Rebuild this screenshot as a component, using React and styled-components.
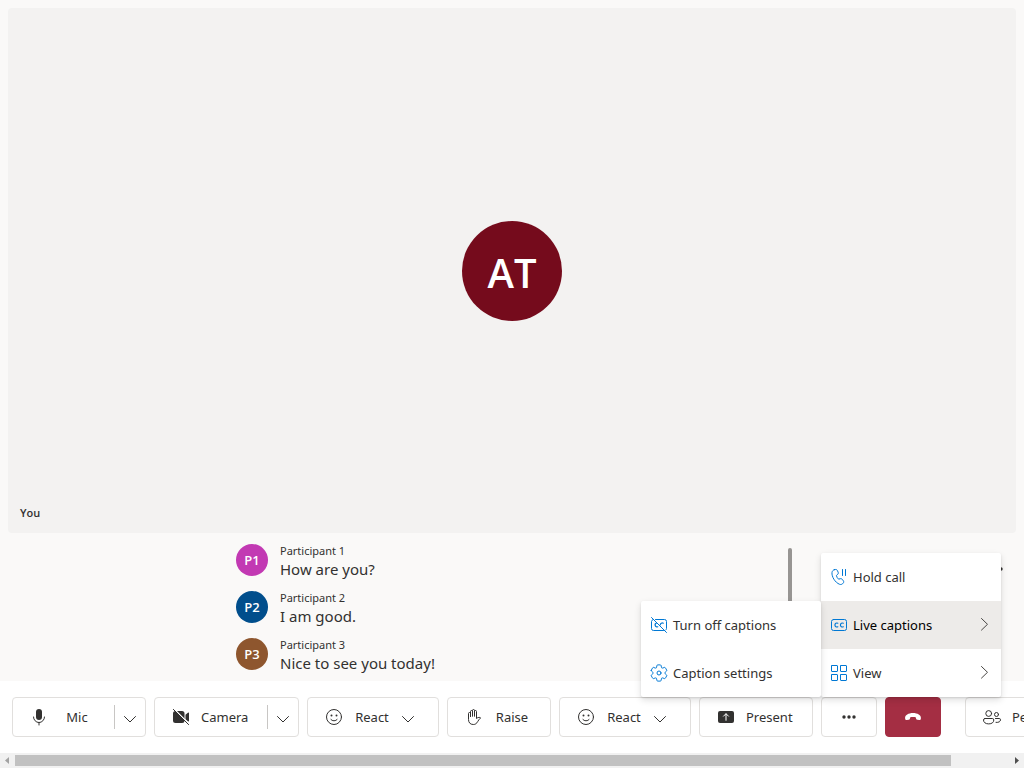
import React from 'react';
import styled, { createGlobalStyle } from 'styled-components';

const GlobalStyle = createGlobalStyle`
  * { box-sizing: border-box; }
  body {
    margin: 0;
    background: #faf9f8;
    color: #323130;
    font-family: "Noto Sans", "Open Sans", sans-serif;
    font-size: 13px;
  }
  button { font: inherit; color: inherit; }
`;

const Page = styled.div`
  display: flex;
  flex-direction: column;
  min-height: 100vh;
  overflow: hidden;
`;

const VideoTile = styled.main`
  flex: 1;
  display: grid;
  grid-template-rows: 1fr auto 1fr;
  justify-items: center;
  margin: 8px 8px 0;
  min-height: 240px;
  border-radius: 4px;
  background: #f3f2f1;
`;

const Avatar = styled.div`
  display: flex;
  align-items: center;
  justify-content: center;
  flex: none;
  width: ${(p) => p.$size}px;
  height: ${(p) => p.$size}px;
  border-radius: 50%;
  background: ${(p) => p.$color};
  color: #fff;
  font-family: "Open Sans", "Noto Sans", sans-serif;
  font-size: ${(p) => p.$font}px;
  font-weight: 600;
`;

const TileAvatar = styled(Avatar)`
  grid-row: 2;
  padding-top: 4px;
`;

const TileName = styled.span`
  grid-row: 3;
  align-self: end;
  justify-self: start;
  padding: 12px;
  font-family: "Open Sans", "Noto Sans", sans-serif;
  font-size: 11px;
  line-height: 16px;
  font-weight: 600;
`;

const CaptionStrip = styled.section`
  display: grid;
  grid-template-columns: 1fr 556px 1fr;
  height: 148px;
  padding: 11px 8px 0 12px;
`;

const CaptionPanel = styled.div`
  grid-column: 2;
  display: flex;
  justify-content: space-between;
`;

const CaptionList = styled.ul`
  display: flex;
  flex-direction: column;
  gap: 10px;
  margin: 0;
  padding: 0;
  list-style: none;
`;

const CaptionRow = styled.li`
  display: flex;
  gap: 12px;
  height: 37px;
`;

const Speaker = styled.div`
  font-size: 11px;
  line-height: 14px;
`;

const Spoken = styled.div`
  font-size: 15px;
  line-height: 22px;
`;

const CaptionScroll = styled.div`
  width: 4px;
  height: 72px;
  margin-top: 4px;
  border-radius: 2px;
  background: #979593;
`;

const CaptionOptions = styled.button`
  justify-self: end;
  align-self: start;
  display: flex;
  margin: 15px 10px 0 0;
  padding: 0;
  border: 0;
  background: none;
`;

const ControlBar = styled.nav`
  display: flex;
  gap: 8px;
  height: 72px;
  padding: 16px 12px;
  background: #fff;
`;

const ControlButton = styled.button`
  display: flex;
  align-items: center;
  flex: none;
  gap: 8px;
  width: ${(p) => p.$width}px;
  height: 40px;
  padding: 0 0 0 16px;
  border: 1px solid #e1dfdd;
  border-radius: 4px;
  background: #fff;
`;

const IconOnlyButton = styled(ControlButton)`
  justify-content: center;
  padding: 0;
`;

const HangUpButton = styled(IconOnlyButton)`
  margin-right: 16px;
  border-color: #a42e43;
  background: #a42e43;
  color: #fff;
`;

const SplitControl = styled.div`
  display: flex;
  align-items: center;
  flex: none;
  width: ${(p) => p.$width}px;
  height: 40px;
  border: 1px solid #e1dfdd;
  border-radius: 4px;
  background: #fff;
`;

const SplitMain = styled.button`
  flex: 1;
  display: flex;
  align-items: center;
  gap: 8px;
  height: 24px;
  padding: 0 0 0 16px;
  border: 0;
  border-right: 1px solid #c8c6c4;
  background: none;
`;

const SplitMenu = styled.button`
  display: flex;
  align-items: center;
  justify-content: center;
  width: 30px;
  height: 38px;
  padding: 4px 0 0;
  border: 0;
  background: none;
`;

const Label = styled.span`
  min-width: 40px;
  padding: 0 2px;
  text-align: center;
  white-space: nowrap;
`;

const DropMark = styled.span`
  display: flex;
  padding-top: 4px;
`;

const MenuAnchor = styled.div`
  position: relative;
  flex: none;
`;

const Menu = styled.ul`
  position: absolute;
  z-index: 2;
  width: 180px;
  margin: 0;
  padding: 0;
  list-style: none;
  border-radius: 2px;
  background: #fff;
  box-shadow: 0 3px 7px rgba(0, 0, 0, 0.13), 0 1px 2px rgba(0, 0, 0, 0.11);
`;

const MoreMenu = styled(Menu)`
  bottom: 100%;
  left: 0;
`;

const SubMenu = styled(Menu)`
  top: 0;
  right: 100%;
`;

const MenuEntry = styled.li`
  position: relative;
`;

const MenuItem = styled.button`
  display: flex;
  align-items: center;
  gap: 4px;
  width: 100%;
  height: 48px;
  padding: 0 8px;
  border: 0;
  background: ${(p) => (p.$active ? '#edebe9' : 'transparent')};
  color: ${(p) => (p.$active ? '#000' : '#323130')};
  text-align: left;
`;

const MenuText = styled.span`
  flex: 1;
`;

const MenuIcon = styled.span`
  display: flex;
  color: #0078d4;
`;

const ScrollTrack = styled.div`
  display: flex;
  align-items: center;
  height: 15px;
  background: #f1f1f1;
`;

const ScrollArrow = styled.button`
  display: flex;
  align-items: center;
  justify-content: center;
  width: 15px;
  height: 15px;
  padding: 0;
  border: 0;
  background: none;
  color: ${(p) => (p.$dim ? '#a3a3a3' : '#505050')};
`;

const ScrollRail = styled.div`
  flex: 1;
  padding-right: 58px;
`;

const ScrollThumb = styled.div`
  height: 11px;
  background: #c1c1c1;
`;

const Svg = styled.svg`
  display: block;
  flex: none;
  fill: none;
  stroke: currentColor;
  stroke-width: 1;
  stroke-linecap: round;
  stroke-linejoin: round;
`;

const Icon = ({ size = 20, children }) => (
  <Svg width={size} height={size} viewBox={`0 0 ${size} ${size}`} aria-hidden="true">
    {children}
  </Svg>
);

const solid = { fill: 'currentColor', stroke: 'none' };

const MicIcon = () => (
  <Icon>
    <rect x="7" y="2" width="6" height="11" rx="3" {...solid} />
    <path d="M4.5 10a5.5 5.5 0 0 0 11 0M10 15.5V18" />
  </Icon>
);

const CameraOffIcon = () => (
  <Icon>
    <path d="M4.5 4H11a2.5 2.5 0 0 1 2.5 2.5v7A2.5 2.5 0 0 1 11 16H4.500A2.5 2.5 0 0 1 2 13.500v-7A2.5 2.5 0 0 1 4.500 4ZM14.500 7.700l2.700-2.100c.3-.3.8 0 .8.4v8c0 .4-.5.7-.8.4l-2.700-2.100Z" {...solid} />
    <path d="M3 2l15.500 15.500" stroke="#fff" strokeWidth="1.5" />
    <path d="M2.400 2.400l15.200 15.200" />
  </Icon>
);

const SmileIcon = () => (
  <Icon>
    <circle cx="10" cy="10" r="7.5" />
    <path d="M6.900 12.500a4 4 0 0 0 6.200 0" />
    <circle cx="7.5" cy="8.5" r="1" {...solid} />
    <circle cx="12.5" cy="8.5" r="1" {...solid} />
  </Icon>
);

const HandIcon = () => (
  <Icon>
    <path d="M6.500 9.500V4.500a1 1 0 0 1 2 0V9M8.500 9V3.500a1 1 0 0 1 2 0V9M10.500 9V4.500a1 1 0 0 1 2 0V11.500c.9-.9 2.300-1.300 3.700-1 .3.1.4.4.2.7-1.300 1-1.900 2.100-2.700 3.400-1.100 1.900-2.200 2.900-4.400 2.900-3.200 0-4.800-2.100-4.800-5V6.500a1 1 0 0 1 2 0V9.500" />
  </Icon>
);

const PresentIcon = () => (
  <Icon>
    <rect x="2" y="4" width="16" height="12" rx="2" {...solid} />
    <path d="M10 13.300V7M7.500 9.200L10 6.700l2.500 2.500" stroke="#fff" />
  </Icon>
);

const DotsIcon = () => (
  <Icon>
    <circle cx="5" cy="10" r="1.7" {...solid} />
    <circle cx="10" cy="10" r="1.7" {...solid} />
    <circle cx="15" cy="10" r="1.7" {...solid} />
  </Icon>
);

const HangUpIcon = () => (
  <Icon>
    <path d="M2.100 11.300C1.700 8.100 5.600 6 10 6s8.300 2.100 7.900 5.300l-.1.700c-.1.700-.8 1.200-1.500 1.100l-2-.3c-.6-.1-1.100-.5-1.200-1.100l-.4-1.500C11.600 9.800 8.400 9.800 7.300 10.200l-.4 1.500c-.1.600-.6 1-1.200 1.100l-2 .3c-.7.1-1.400-.4-1.500-1.100Z" {...solid} />
  </Icon>
);

const PeopleIcon = () => (
  <Icon>
    <circle cx="6.700" cy="6.500" r="2.900" />
    <circle cx="14.500" cy="7.500" r="2" />
    <path d="M3 11.500h7.300a1.500 1.500 0 0 1 1.500 1.500c0 2.400-2 3.900-5.100 3.900S1.500 15.400 1.500 13A1.500 1.500 0 0 1 3 11.500ZM13.500 11.500h3.700a1.300 1.300 0 0 1 1.300 1.300c0 1.700-1.700 2.900-4.500 2.600" />
  </Icon>
);

const HoldIcon = () => (
  <Icon>
    <path d="M13.500 2.500v6M16.500 2.500v6M5.300 2.700l1-.2c.9-.2 1.600.2 2 .9l.9 1.900c.3.700.2 1.400-.4 1.900L7.400 8.500c.3 1.400 1 2.700 2.200 3.700l1.700-.5c.7-.2 1.400 0 1.900.6l1.200 1.600c.5.7.4 1.600-.2 2.200l-.7.7c-.8.7-1.900.9-2.900.5C6 15.500 2.500 9.500 3 5.500c.2-1.400 1-2.400 2.300-2.800Z" />
  </Icon>
);

const CaptionsIcon = () => (
  <Icon>
    <rect x="2.5" y="4.5" width="15" height="11" rx="2" />
    <path d="M8.800 8.200a2 2 0 1 0 0 3.600M14.300 8.200a2 2 0 1 0 0 3.600" strokeWidth="1.2" />
  </Icon>
);

const CaptionsOffIcon = () => (
  <Icon>
    <path d="M6.500 4.500h9a2 2 0 0 1 2 2v7a2 2 0 0 1-.7 1.500M14.500 15.500h-10a2 2 0 0 1-2-2v-7a2 2 0 0 1 1.300-1.800M2.500 2.500l15 15" />
    <path d="M7.500 8a2 2 0 1 0 1.300 3.800M14.300 8.200a2 2 0 0 0-3 1.600" strokeWidth="1.2" />
  </Icon>
);

const SettingsIcon = () => (
  <Icon>
    <path d="M1.910 7.380A8.500 8.500 0 0 1 3.700 4.300a.5.5 0 0 1 .54-.13l1.920.68a1 1 0 0 0 1.320-.76l.36-2a.5.5 0 0 1 .4-.4 8.530 8.530 0 0 1 3.550 0c.2.040.35.2.38.4l.37 2a1 1 0 0 0 1.320.76l1.920-.68a.5.5 0 0 1 .54.13 8.500 8.500 0 0 1 1.780 3.080c.06.2 0 .4-.15.54l-1.560 1.320a1 1 0 0 0 0 1.520l1.560 1.320a.5.5 0 0 1 .15.54 8.500 8.500 0 0 1-1.780 3.080.5.5 0 0 1-.54.13l-1.920-.68a1 1 0 0 0-1.320.76l-.37 2a.5.5 0 0 1-.38.4 8.530 8.530 0 0 1-3.560 0 .5.5 0 0 1-.39-.4l-.36-2a1 1 0 0 0-1.320-.76l-1.920.68a.5.5 0 0 1-.54-.13 8.500 8.500 0 0 1-1.780-3.080.5.5 0 0 1 .15-.54l1.560-1.320a1 1 0 0 0 0-1.520L2.060 7.920a.5.5 0 0 1-.15-.54Z" transform="translate(.4 .4) scale(.96)" />
    <circle cx="10" cy="10" r="2" />
  </Icon>
);

const GridIcon = () => (
  <Icon>
    <rect x="2.5" y="2.5" width="6" height="6" rx=".5" />
    <rect x="11.5" y="2.5" width="6" height="6" rx=".5" />
    <rect x="2.5" y="11.5" width="6" height="6" rx=".5" />
    <rect x="11.5" y="11.5" width="6" height="6" rx=".5" />
  </Icon>
);

const ChevronDown = () => (
  <Icon size={16}>
    <path d="M2.500 5.500L8 11l5.500-5.500" />
  </Icon>
);

const ChevronRight = () => (
  <Icon size={16}>
    <path d="M4.500 1.500l6 5.800-6 5.800" stroke="#484644" />
  </Icon>
);

const LeftArrow = () => (
  <Icon size={7}>
    <path d="M5 0L1 3.500 5 7Z" {...solid} />
  </Icon>
);

const RightArrow = () => (
  <Icon size={7}>
    <path d="M2 0l4 3.500L2 7Z" {...solid} />
  </Icon>
);

const captions = [
  { initials: 'P1', name: 'Participant 1', text: 'How are you?', color: '#c239b3' },
  { initials: 'P2', name: 'Participant 2', text: 'I am good.', color: '#004e8c' },
  { initials: 'P3', name: 'Participant 3', text: 'Nice to see you today!', color: '#8e562e' },
];

const SplitButton = ({ width, icon, label }) => (
  <SplitControl $width={width}>
    <SplitMain>
      {icon}
      <Label>{label}</Label>
    </SplitMain>
    <SplitMenu aria-label={`${label} options`}>
      <ChevronDown />
    </SplitMenu>
  </SplitControl>
);

const LabeledButton = ({ width, icon, label, drop }) => (
  <ControlButton $width={width}>
    {icon}
    <Label>{label}</Label>
    {drop && (
      <DropMark>
        <ChevronDown />
      </DropMark>
    )}
  </ControlButton>
);

const Entry = ({ icon, label, active, more, children }) => (
  <MenuEntry>
    <MenuItem $active={active}>
      <MenuIcon>{icon}</MenuIcon>
      <MenuText>{label}</MenuText>
      {more && <ChevronRight />}
    </MenuItem>
    {children}
  </MenuEntry>
);

export default function App() {
  return (
    <Page>
      <GlobalStyle />
      <VideoTile>
        <TileAvatar $size={100} $color="#750b1c" $font={40}>AT</TileAvatar>
        <TileName>You</TileName>
      </VideoTile>

      <CaptionStrip aria-label="Live captions">
        <CaptionPanel>
          <CaptionList>
            {captions.map((c) => (
              <CaptionRow key={c.initials}>
                <Avatar $size={32} $color={c.color} $font={13}>{c.initials}</Avatar>
                <div>
                  <Speaker>{c.name}</Speaker>
                  <Spoken>{c.text}</Spoken>
                </div>
              </CaptionRow>
            ))}
          </CaptionList>
          <CaptionScroll />
        </CaptionPanel>
        <CaptionOptions aria-label="Caption options">
          <DotsIcon />
        </CaptionOptions>
      </CaptionStrip>

      <ControlBar aria-label="Call controls">
        <SplitButton width={134} icon={<MicIcon />} label="Mic" />
        <SplitButton width={145} icon={<CameraOffIcon />} label="Camera" />
        <LabeledButton width={132} icon={<SmileIcon />} label="React" drop />
        <LabeledButton width={104} icon={<HandIcon />} label="Raise" />
        <LabeledButton width={132} icon={<SmileIcon />} label="React" drop />
        <LabeledButton width={114} icon={<PresentIcon />} label="Present" />
        <MenuAnchor>
          <IconOnlyButton $width={56} aria-label="More">
            <DotsIcon />
          </IconOnlyButton>
          <MoreMenu>
            <Entry icon={<HoldIcon />} label="Hold call" />
            <Entry icon={<CaptionsIcon />} label="Live captions" active more>
              <SubMenu>
                <Entry icon={<CaptionsOffIcon />} label="Turn off captions" />
                <Entry icon={<SettingsIcon />} label="Caption settings" />
              </SubMenu>
            </Entry>
            <Entry icon={<GridIcon />} label="View" more />
          </MoreMenu>
        </MenuAnchor>
        <HangUpButton $width={56} aria-label="Leave">
          <HangUpIcon />
        </HangUpButton>
        <LabeledButton width={110} icon={<PeopleIcon />} label="People" />
      </ControlBar>

      <ScrollTrack>
        <ScrollArrow $dim aria-label="Scroll left">
          <LeftArrow />
        </ScrollArrow>
        <ScrollRail>
          <ScrollThumb />
        </ScrollRail>
        <ScrollArrow aria-label="Scroll right">
          <RightArrow />
        </ScrollArrow>
      </ScrollTrack>
    </Page>
  );
}
